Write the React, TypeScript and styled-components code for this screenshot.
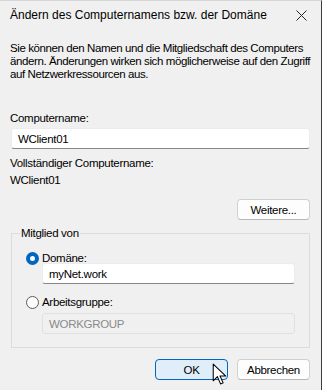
import React, { FC } from 'react';
import styled, { createGlobalStyle, css } from 'styled-components';

const GlobalStyle = createGlobalStyle`
  html, body {
    margin: 0;
    padding: 0;
    background: #f0f0f0;
  }
  * {
    box-sizing: border-box;
  }
`;

const StyledWindow = styled.div`
  position: relative;
  width: 322px;
  height: 390px;
  background: #f0f0f0;
  border-top: 1px solid #d6d6d6;
  border-right: 1px solid #3c3c3c;
  font-family: 'Liberation Sans', Arial, sans-serif;
  font-size: 11.5px;
  letter-spacing: -0.3px;
  color: #000;
  overflow: hidden;
`;

const StyledTitleBar = styled.div`
  display: flex;
  align-items: center;
  justify-content: space-between;
  height: 28px;
  padding: 0 10px 0 10px;
  font-size: 12px;
  letter-spacing: 0;
`;

const StyledClose = styled.div`
  display: flex;
  align-items: center;
  justify-content: center;
  width: 20px;
  height: 20px;
`;

const StyledBody = styled.div`
  display: flex;
  flex-direction: column;
  padding: 10px 11px 0 10px;
`;

const StyledIntro = styled.p`
  margin: 3px -5px 0 0;
  line-height: 13px;
  letter-spacing: -0.4px;
`;

const StyledLabel = styled.div<{ $top?: number }>`
  margin-top: ${(p) => p.$top ?? 0}px;
  line-height: 15px;
`;

const StyledInput = styled.div<{ $disabled?: boolean }>`
  display: flex;
  align-items: center;
  height: 21px;
  padding: 0 6px;
  border-radius: 3px;
  ${(p) =>
    p.$disabled
      ? css`
          background: #f0f0f0;
          border: 1px solid #e0e0e0;
          color: #8a8a8a;
        `
      : css`
          background: #fff;
          border: 1px solid #ececec;
          border-bottom: 1px solid #868686;
          color: #000;
        `}
`;

const StyledWideInput = styled(StyledInput)`
  margin: 2px 0 0 1px;
`;

const StyledButtonRow = styled.div<{ $top: number }>`
  display: flex;
  justify-content: flex-end;
  gap: 9px;
  margin-top: ${(p) => p.$top}px;
`;

const StyledButton = styled.div<{ $primary?: boolean }>`
  position: relative;
  display: flex;
  align-items: center;
  justify-content: center;
  width: 73px;
  height: 21px;
  border-radius: 4px;
  ${(p) =>
    p.$primary
      ? css`
          background: #e0eef9;
          border: 1px solid #0067c0;
        `
      : css`
          background: #fdfdfd;
          border: 1px solid #d0d0d0;
          border-bottom-color: #b9b9b9;
        `}
`;

const StyledGroup = styled.fieldset`
  margin: 7px 0 0 1px;
  padding: 1px 14px 13px 14px;
  border: 1px solid #dcdcdc;
  border-radius: 0;
`;

const StyledLegend = styled.legend`
  padding: 0 1px;
  margin-left: -6px;
`;

const StyledRadioRow = styled.div<{ $top?: number }>`
  display: flex;
  align-items: center;
  gap: 3px;
  margin-top: ${(p) => p.$top ?? 0}px;
  height: 14px;
`;

const StyledRadio = styled.span<{ $checked?: boolean }>`
  display: inline-block;
  width: 13px;
  height: 13px;
  border-radius: 50%;
  ${(p) =>
    p.$checked
      ? css`
          background: #fff;
          border: 4px solid #0067c0;
        `
      : css`
          background: #fdfdfd;
          border: 1px solid #5c5c5c;
        `}
`;

const StyledIndented = styled.div<{ $top: number }>`
  margin-left: 16px;
  margin-top: ${(p) => p.$top}px;
`;

const StyledCursor = styled.svg`
  position: absolute;
  left: 56px;
  top: 3px;
`;

const Cursor: FC = () => (
  <StyledCursor width='15' height='23' viewBox='0 0 14 22'>
    <path
      d='M1 1 L1 17 L5 13 L8 20 L10.5 19 L7.5 12.5 L13 12.5 Z'
      fill='#fff'
      stroke='#000'
      strokeWidth='1'
      strokeLinejoin='round'
    />
  </StyledCursor>
);

const App: FC = () => {
  return (
    <StyledWindow>
      <GlobalStyle />
      <StyledTitleBar>
        <span>Ändern des Computernamens bzw. der Domäne</span>
        <StyledClose>
          <svg width='11' height='11' viewBox='0 0 11 11'>
            <path d='M0.5 0.5 L10.5 10.5 M10.5 0.5 L0.5 10.5' stroke='#222' strokeWidth='1' />
          </svg>
        </StyledClose>
      </StyledTitleBar>
      <StyledBody>
        <StyledIntro>
          Sie können den Namen und die Mitgliedschaft des Computers ändern. Änderungen
          wirken sich möglicherweise auf den Zugriff auf Netzwerkressourcen aus.
        </StyledIntro>
        <StyledLabel $top={30}>Computername:</StyledLabel>
        <StyledWideInput>WClient01</StyledWideInput>
        <StyledLabel $top={7}>Vollständiger Computername:</StyledLabel>
        <StyledLabel $top={2}>WClient01</StyledLabel>
        <StyledButtonRow $top={11}>
          <StyledButton>Weitere...</StyledButton>
        </StyledButtonRow>
        <StyledGroup>
          <StyledLegend>Mitglied von</StyledLegend>
          <StyledRadioRow $top={11}>
            <StyledRadio $checked />
            <span>Domäne:</span>
          </StyledRadioRow>
          <StyledIndented $top={-2}>
            <StyledInput>myNet.work</StyledInput>
          </StyledIndented>
          <StyledRadioRow $top={11}>
            <StyledRadio />
            <span>Arbeitsgruppe:</span>
          </StyledRadioRow>
          <StyledIndented $top={4}>
            <StyledInput $disabled>WORKGROUP</StyledInput>
          </StyledIndented>
        </StyledGroup>
        <StyledButtonRow $top={11}>
          <StyledButton $primary>
            OK
            <Cursor />
          </StyledButton>
          <StyledButton>Abbrechen</StyledButton>
        </StyledButtonRow>
      </StyledBody>
    </StyledWindow>
  );
};

export default App;
